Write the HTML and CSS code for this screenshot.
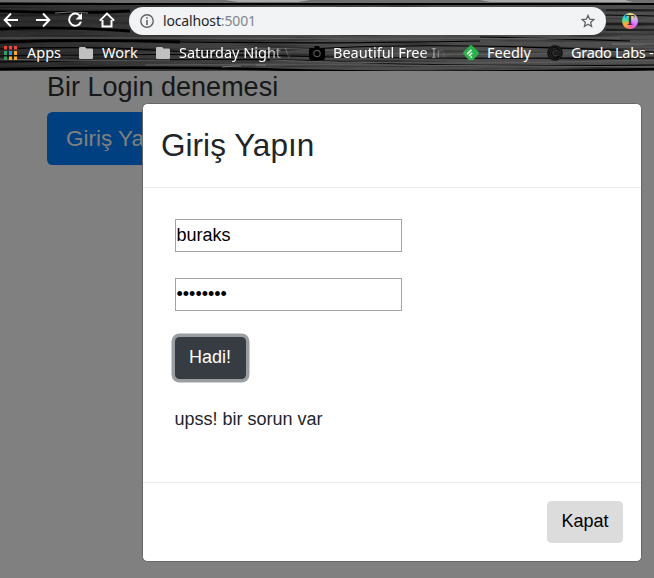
FILE: index.html
```html
<!DOCTYPE html>
<html lang="tr">
<head>
<meta charset="utf-8">
<title>Bir Login denemesi</title>
<link rel="stylesheet" href="styles.css">
</head>
<body>
<header class="browser">
  <svg class="wood" viewBox="0 0 654 71" preserveAspectRatio="none" aria-hidden="true">
    <defs>
      <linearGradient id="base"><stop offset="0" stop-color="#2b2b2b"/><stop offset=".5" stop-color="#4b4b4b"/><stop offset="1" stop-color="#4e4e4e"/></linearGradient>
      <filter id="grain" x="0" y="0" width="100%" height="100%"><feTurbulence type="fractalNoise" baseFrequency=".009 .28" numOctaves="3" seed="8"/><feColorMatrix values="0 0 0 0 0  0 0 0 0 0  0 0 0 0 0  4 0 0 0 -2"/></filter>
    </defs>
    <path fill="url(#base)" d="M0 0h654v71H0z"/>
    <path fill="#000" filter="url(#grain)" opacity=".35" d="M0 0h654v71H0z"/>
    <path fill="#6f6f6f" d="M0 0h654v4L520 3 380 5 0 2z"/>
    <path fill="#aaa" d="M225 0h85l-12 2h-60zM480 0h145l8 2H490z"/>
    <g fill="none" stroke="#000">
      <path stroke-width="2" d="M0 4h654"/>
      <path stroke-width="3" d="M0 11q70 3 130 0M0 29q55-3 130 2M0 42q90-3 180 0"/>
      <path stroke-width="1.200" d="M180 42q160 2 300-1M0 49q90-3 150 1t180-2 324 4M0 56q180-3 290 0t364 2M0 62q240-5 350 0t304 3M606 10h48M606 15l48 1M606 24h48M606 30h48M480 37q90 2 150 4"/>
      <path stroke-width="2.500" d="M0 69q160-3 290 1t364-1"/>
    </g>
    <g fill="none" stroke="#606060">
      <path d="M0 38h170l210 1 240-1M190 51q90-5 180 1t284-2M270 60q150 6 384 0M145 65q170-1 509 2M0 59q70 2 170 1"/>
      <path stroke="#777" d="M55 13l15-1 18 1M222 67l13-1h6M256 65h10M612 44h42"/>
    </g>
  </svg>
  <div class="toolbar">
    <svg class="nav" viewBox="0 0 129 28" aria-hidden="true">
      <g fill="none" stroke="#fff" stroke-width="2">
        <path d="M18 13H5M11 6.500L4.700 13l6.300 6.500M36 13h13M43 6.500l6.300 6.500-6.300 6.500"/>
        <path d="M80.300 9.300A6.100 6.100 0 1 0 81 14.600"/>
        <path d="M102.500 13v6.500h9V13M99.800 13.600l7.200-7 7.200 7"/>
      </g>
      <path fill="#fff" d="M82 6v6.500h-6.500z"/>
    </svg>
    <div class="address">
      <svg class="info" viewBox="0 0 14 14" aria-hidden="true"><circle cx="7" cy="7" r="6.200" fill="none" stroke="#5f6368" stroke-width="1.400"/><path fill="#5f6368" d="M6.200 6h1.600v5H6.200zM6.200 3.200h1.600v1.600H6.200z"/></svg>
      <span class="url">localhost<span class="port">:5001</span></span>
      <svg class="star" viewBox="0 0 14 14" aria-hidden="true"><path fill="none" stroke="#5f6368" stroke-width="1.300" d="M7 1.400l1.700 3.800 4.200.4-3.200 2.700.9 4.200L7 10.300l-3.600 2.200.9-4.200-3.200-2.700 4.200-.4z"/></svg>
    </div>
    <span class="extension"><span>T</span></span>
  </div>
  <nav class="bookmarks">
    <svg class="apps" viewBox="0 0 13 14" aria-hidden="true"><path fill="#f44336" d="M0 0h3v3.500H0zM5 0h3v3.500H5zM10 0h3v3.500h-3z"/><path fill="#34a060" d="M0 5h3v4H0zM0 10.500h3V14H0z"/><path fill="#2196f3" d="M5 5h3v4H5z"/><path fill="#ffa826" d="M10 5h3v4h-3zM5 10.500h3V14H5zM10 10.500h3V14h-3z"/></svg>
    <span class="label label-apps">Apps</span>
    <svg class="folder" viewBox="0 0 14 12" aria-hidden="true"><path fill="#c0c0c0" d="M1.300 0H6l1.500 1.600h5.200A1.300 1.300 0 0 1 14 3v7.700a1.300 1.300 0 0 1-1.300 1.300H1.300A1.300 1.300 0 0 1 0 10.700V1.300A1.300 1.300 0 0 1 1.300 0z"/></svg>
    <span class="label label-work">Work</span>
    <svg class="folder" viewBox="0 0 14 12" aria-hidden="true"><path fill="#c0c0c0" d="M1.300 0H6l1.500 1.600h5.200A1.300 1.300 0 0 1 14 3v7.700a1.300 1.300 0 0 1-1.300 1.300H1.300A1.300 1.300 0 0 1 0 10.700V1.300A1.300 1.300 0 0 1 1.300 0z"/></svg>
    <span class="label label-night">Saturday Night V</span>
    <svg class="site" viewBox="0 0 16 16" aria-hidden="true"><path d="M2 3h3l1-2h4l1 2h3q2 0 2 2v8q0 2-2 2H2q-2 0-2-2V5q0-2 2-2z"/><circle cx="8" cy="8.500" r="3.200" fill="none" stroke="#555" stroke-width="1.200"/></svg>
    <span class="label label-free">Beautiful Free In</span>
    <svg class="site" viewBox="0 0 16 16" aria-hidden="true"><path fill="#2bb24c" d="M6.800.6q1.200-1 2.400 0l6.200 6.200q1 1.200 0 2.400L10 15.200H6L.6 9.200q-1-1.200 0-2.400z"/><path fill="none" stroke="#fff" stroke-width="1.500" d="M4 9.200l4.400-4.400M6 11l3.200-3.200M7.700 12.700l1.200-1.200"/></svg>
    <span class="label label-feedly">Feedly</span>
    <svg class="site" viewBox="0 0 16 16" aria-hidden="true"><circle cx="8" cy="8" r="7.500" fill="#333"/><g fill="none" stroke="#0c0c0c" stroke-width="1.200"><circle cx="8" cy="8" r="7.200"/><path d="M13 5.500A5.500 5.500 0 1 0 13.500 9H6.500M11.500 5.500A4 4 0 1 0 11.500 11M7 7h7"/></g></svg>
    <span class="label label-grado">Grado Labs -</span>
  </nav>
</header>
<main class="page">
  <h1 class="page-title">Bir Login denemesi</h1>
  <button class="btn btn-open" type="button">Giriş Ya</button>
  <section class="modal" role="dialog" aria-labelledby="modal-title">
    <div class="modal-header"><h2 id="modal-title">Giriş Yapın</h2></div>
    <form class="modal-body">
      <input class="field" type="text" value="buraks">
      <input class="field" type="password" value="12345678">
      <button class="btn btn-submit" type="button">Hadi!</button>
      <p class="message">upss! bir sorun var</p>
    </form>
    <div class="modal-footer"><button class="btn btn-close" type="button">Kapat</button></div>
  </section>
</main>
</body>
</html>
```
FILE: styles.css
```css
* { box-sizing: border-box; }
body {
  margin: 0;
  height: 578px;
  overflow: hidden;
  display: flex;
  flex-direction: column;
  background: #808080;
  font: 18px/27px "Liberation Sans", Arial, sans-serif;
}
svg { display: block; flex: none; }
h1, h2, p { margin: 0; font-weight: 400; }

.browser {
  position: relative;
  height: 71px;
  flex: none;
  padding-top: 7px;
  overflow: hidden;
  font-family: "Noto Sans", sans-serif;
}
.wood { position: absolute; inset: 0; width: 654px; height: 71px; }
.toolbar { position: relative; display: flex; align-items: center; height: 28px; }
.nav { width: 129px; height: 28px; }
.address {
  width: 477px;
  height: 28px;
  flex: none;
  display: flex;
  align-items: center;
  padding: 0 11px;
  border-radius: 14px;
  background: #f1f3f4;
}
.info { width: 14px; height: 14px; }
.url { margin-left: 9px; font-size: 14px; line-height: 28px; color: #24272b; letter-spacing: -.15px; }
.port { color: #80868b; }
.star { width: 14px; height: 14px; margin-left: auto; }
.extension {
  width: 16px;
  height: 16px;
  margin-left: 16px;
  border-radius: 50%;
  background: conic-gradient(#ffe45c, #c7a0ff 25%, #e65cff 38%, #ff7777 52%, #ffae35 66%, #45df90 78%, #26cfff 88%, #ffe45c);
  color: #333;
  font: bold 14px/16px "Liberation Serif", serif;
  text-align: center;
}
.bookmarks { position: relative; display: flex; align-items: center; height: 36px; padding-left: 4px; }
.apps { width: 13px; height: 14px; }
.folder { width: 14px; height: 12px; }
.site { width: 16px; height: 16px; }
.label {
  flex: none;
  white-space: nowrap;
  color: #fff;
  font-size: 14.500px;
  line-height: 24px;
  padding-bottom: 2px;
}
.label-apps { width: 52px; margin-left: 10px; }
.label-work { width: 54px; margin-left: 9px; }
.label-night { width: 115px; margin: 0 15px 0 9px; mask-image: linear-gradient(90deg, #000 76%, transparent 98%); }
.label-free { width: 115px; margin: 0 15px 0 8px; mask-image: linear-gradient(90deg, #000 76%, transparent 98%); }
.label-feedly { width: 52px; margin: 0 8px; }
.label-grado { width: 83px; margin-left: 8px; letter-spacing: -.3px; }

.page { position: relative; flex: 1; padding: 1px 0 0 47px; }
.page-title { font-size: 27px; line-height: 30px; color: #151719; }
.btn {
  display: block;
  padding: 6.750px 13.500px;
  border: 1px solid transparent;
  border-radius: 4.500px;
  font: inherit;
}
.btn-open {
  width: 153px;
  height: 53px;
  margin-top: 10px;
  padding: 0 18px;
  border-radius: 5.400px;
  background: #004080;
  color: #808080;
  font-size: 22.500px;
  text-align: left;
}
.modal {
  position: absolute;
  left: 142px;
  top: 32px;
  width: 500px;
  height: 459px;
  display: flex;
  flex-direction: column;
  border: 1px solid #666;
  border-radius: 5.400px;
  background: #fff;
  color: #212529;
}
.modal-header { height: 84px; padding: 18px; border-bottom: 1px solid #e9ecef; }
.modal-header h2 { font-size: 31.500px; line-height: 47px; letter-spacing: .04px; }
.modal-body { flex: 1; padding: 31px 32px; display: flex; flex-direction: column; align-items: flex-start; }
.field {
  width: 227px;
  height: 33px;
  margin: 0 0 26px;
  padding: 1px .5px;
  border: 1px solid #a3a3a3;
  border-radius: 0;
  background: #fff;
  color: #000;
  font: inherit;
}
.btn-submit { width: 71px; height: 42px; padding: 0 1px 2px 0; background: #373b42; color: #fff; box-shadow: 0 0 0 3.500px #9b9ea1; }
.message { margin: 27px 0 0 -.5px; }
.modal-footer { height: 79px; padding: 18px; display: flex; justify-content: flex-end; border-top: 1px solid #e9ecef; }
.btn-close { width: 76px; height: 42px; padding: 0 0 2px; background: #dcdcdc; color: #000; }
```
